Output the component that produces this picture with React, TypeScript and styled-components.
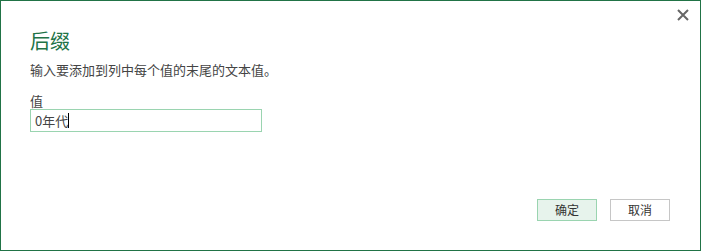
import React from "react";
import styled, { createGlobalStyle } from "styled-components";

const Global = createGlobalStyle`
  html, body { margin: 0; padding: 0; background: #fff; }
  * { box-sizing: border-box; }
`;

const FONT = `"Microsoft YaHei", "Noto Sans CJK SC", "Noto Sans", sans-serif`;

const Dialog = styled.div`
  position: relative;
  width: 701px;
  height: 251px;
  border: 1px solid #217346;
  background: #fff;
  display: flex;
  flex-direction: column;
  padding: 28px 30px 29px 29px;
  font-family: ${FONT};
  color: #444;
`;

const Close = styled.button`
  position: absolute;
  top: 7px;
  right: 10px;
  width: 14px;
  height: 14px;
  padding: 0;
  border: none;
  background: transparent;
  display: flex;
  align-items: center;
  justify-content: center;
`;

const Title = styled.h1`
  margin: 0;
  font-size: 20px;
  line-height: 24px;
  font-weight: normal;
  color: #217346;
`;

const Desc = styled.p`
  margin: 8px 0 0 0;
  font-size: 13px;
  line-height: 17px;
`;

const Label = styled.div`
  margin-top: 14px;
  font-size: 13px;
  line-height: 17px;
`;

const Field = styled.div`
  width: 232px;
  height: 23px;
  border: 1px solid #9ad4b0;
  display: flex;
  align-items: center;
  padding-left: 4px;
  font-size: 13px;
  line-height: 17px;
  color: #444;
`;

const Caret = styled.span`
  display: inline-block;
  width: 1px;
  height: 15px;
  background: #000;
`;

const Footer = styled.div`
  margin-top: auto;
  display: flex;
  justify-content: flex-end;
  gap: 13px;
`;

const Btn = styled.button<{ $primary?: boolean }>`
  width: 60px;
  height: 22px;
  padding: 0;
  font-family: ${FONT};
  font-size: 12px;
  line-height: 16px;
  color: #333;
  background: ${(p) => (p.$primary ? "#e7f3ec" : "#fff")};
  border: 1px solid ${(p) => (p.$primary ? "#9ad4b0" : "#c6c6c6")};
`;

export default function App() {
  return (
    <>
      <Global />
      <Dialog>
        <Close aria-label="关闭">
          <svg width="12" height="12" viewBox="0 0 12 12">
            <path d="M1 1 L11 11 M11 1 L1 11" stroke="#666" strokeWidth="2" />
          </svg>
        </Close>
        <Title>后缀</Title>
        <Desc>输入要添加到列中每个值的末尾的文本值。</Desc>
        <Label>值</Label>
        <Field>
          0年代
          <Caret />
        </Field>
        <Footer>
          <Btn $primary>确定</Btn>
          <Btn>取消</Btn>
        </Footer>
      </Dialog>
    </>
  );
}
